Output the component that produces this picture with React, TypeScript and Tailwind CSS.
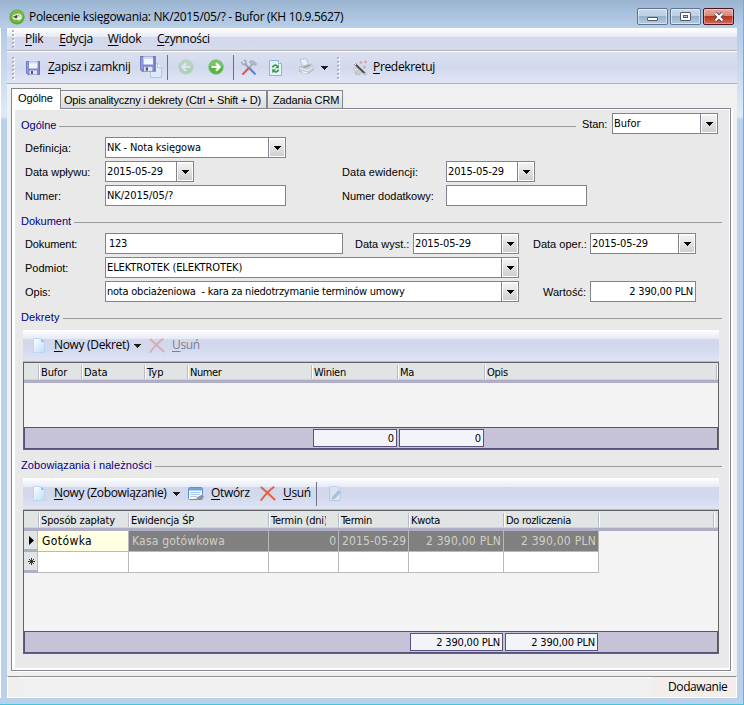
import React from "react";
import clsx from "clsx";

const UI_FONT = "font-['Open_Sans',sans-serif] text-[12px] tracking-[-0.33px]";
const FORM_FONT = "font-['Liberation_Sans',sans-serif] text-[11px]";
const FIELD_FONT = "font-['DejaVu_Sans_Condensed','DejaVu_Sans',sans-serif] text-[11px]";

const BAR =
  "bg-[linear-gradient(to_bottom,#ffffff_0px,#e6eaf5_9px,#d3d8ec_9px,#d3d9ed_60%,#dfe4f5_100%)]";

interface TextProps {
  children?: React.ReactNode;
  className?: string;
}

/* ---------- small pieces ---------- */

const Caret = ({ className }: { className?: string }) => (
  <svg width="7" height="4" viewBox="0 0 7 4" className={clsx("shrink-0", className)} shapeRendering="crispEdges">
    <path d="M0 0h7v1H6v1H5v1H4v1H3V3H2V2H1V1H0z" fill="currentColor" />
  </svg>
);

const Grip = ({ className }: TextProps) => (
  <div className={clsx("flex flex-col gap-[2px] shrink-0", className)}>
    {Array.from({ length: 6 }).map((_, i) => (
      <span key={i} className="w-[2px] h-[2px] shrink-0 bg-[#b1b4bf] shadow-[1px_1px_0_#ffffff]" />
    ))}
  </div>
);

const Label = ({ children, className }: TextProps) => (
  <span className={clsx(FORM_FONT, "block shrink-0 whitespace-nowrap text-black leading-[23px] h-[21px]", className)}>
    {children}
  </span>
);

interface FieldProps {
  value?: string;
  className?: string;
  textClass?: string;
  dropdown?: boolean;
  right?: boolean;
}

const Field = ({ value, className, textClass, dropdown, right }: FieldProps) => (
  <div className={clsx("flex h-[21px] shrink-0 bg-white border border-[#7f848e]", className)}>
    <div
      className={clsx(
        FIELD_FONT,
        "flex-1 min-w-0 whitespace-pre leading-[20px] h-[19px] text-black",
        right ? "text-right pr-[2px]" : "pl-[1px]",
        textClass
      )}
    >
      {value}
    </div>
    {dropdown && (
      <div className="w-[17px] border-l border-[#7f848e] p-px">
        <div className="flex h-full items-center justify-center bg-gradient-to-b from-[#f4f4f4] to-[#cfcfcf] text-black">
          <Caret className="mt-px" />
        </div>
      </div>
    )}
  </div>
);

interface GroupTitleProps {
  title: string;
  className?: string;
  textClass?: string;
}

const GroupTitle = ({ title, className, textClass }: GroupTitleProps) => (
  <div className={clsx("flex h-[12px] items-center", className)}>
    <span className={clsx(FORM_FONT, "leading-[12px] text-[#00007f] whitespace-nowrap shrink-0", textClass)}>{title}</span>
    <span className="ml-[3px] mt-[3px] h-px flex-1 bg-[#9b9b9b]" />
  </div>
);

/* ---------- icons ---------- */

const AppIcon = () => (
  <svg width="16" height="16" viewBox="0 0 16 16">
    <circle cx="8" cy="8" r="7.6" fill="#5fa82f" />
    <circle cx="8" cy="7.2" r="6.4" fill="#78bd42" />
    <path d="M3.400 8.200c.2-2 1.700-3 3.600-2.900 1.400-.8 3.900-.6 5.200.8 1.100 1.400.9 3.900-.9 4.700-1.200.6-2.700.3-3.600-.3-2 .6-4.100-.3-4.300-2.300z" fill="#eef3e8" />
    <path d="M6.800 6.200c1-.4 1.900.4 1.700 1.600s-1.400 1.900-2.300 1.400-.8-2.400.6-3z" fill="#3f4f38" />
    <path d="M4.200 7.800h2.500" stroke="#3f4f38" />
    <path d="M9 6.200l2.300 1.300" stroke="#6e8b5a" strokeWidth=".8" />
  </svg>
);

const SaveShape = () => (
  <>
    <path d="M1.500 1.500h13v13h-11.500l-1.500-1.500z" fill="#7e87cf" stroke="#6d75b8" />
    <path d="M4 1.500h8.500v7H4z" fill="#f2f5fc" />
    <path d="M4 1.500h8.500v2H4z" fill="#cfd8f3" />
    <path d="M4.500 10.500h7.500v4H4.500z" fill="#e4e6ee" />
    <path d="M6 11h2v3H6z" fill="#4d5390" />
    <path d="M2.500 2v11" stroke="#9aa2dd" />
  </>
);

const SaveIcon = () => (
  <svg width="16" height="16" viewBox="0 0 16 16">
    <SaveShape />
  </svg>
);

const SaveNewIcon = () => (
  <svg width="24" height="24" viewBox="0 0 24 24">
    <path d="M11.500 8.500h7l4 4v10h-11z" fill="#dcebfb" stroke="#a9c7e8" />
    <path d="M18.500 8.500v4h4" fill="#f8fcff" stroke="#a9c7e8" />
    <g transform="scale(1.12)">
      <SaveShape />
    </g>
  </svg>
);

const ArrowIcon = ({ back }: { back?: boolean }) => (
  <svg width="16" height="16" viewBox="0 0 16 16" className={back ? "-scale-x-100 opacity-30" : ""}>
    <circle cx="8" cy="8" r="7.300" fill="#55b545" stroke="#7cc173" strokeWidth=".8" />
    <path d="M1.500 7a6.500 6 0 0 1 13 0c-3 1.500-10 1.500-13 0z" fill="#85cf76" opacity=".7" />
    <path d="M3.500 8h7.500M8 4.200L11.800 8 8 11.800" fill="none" stroke="#fff" strokeWidth="2.100" />
  </svg>
);

const ToolsIcon = () => (
  <svg width="18" height="17" viewBox="0 0 18 17">
    <path d="M4.500 4.500L9 9" stroke="#8a95ab" strokeWidth="1.700" />
    <path d="M9.500 9.200l5.300 5.600" stroke="#5f80cf" strokeWidth="2.100" strokeLinecap="round" />
    <path d="M1.500 2.500l.7 2.500 2.500.6 1.500-1.500-.5-2.300-2-.8" fill="none" stroke="#9aa5b8" strokeWidth="1.300" />
    <path d="M12.800 4.800L8.500 9.500" stroke="#9aa3b5" strokeWidth="1.500" />
    <path d="M8.600 9.200L3 15" stroke="#de5656" strokeWidth="2.100" strokeLinecap="round" />
    <path d="M9.500 2.700c2-1.200 4-1 5.300.4l1.700 1.900-1.300 1.400-1.700-1.500-1.700.6z" fill="#b8c0ce" stroke="#8993a6" strokeWidth=".7" />
  </svg>
);

const RefreshIcon = () => (
  <svg width="13" height="16" viewBox="0 0 13 16">
    <path d="M.5.500h9l3 3v12H.5z" fill="#e6f1fc" stroke="#8cb3dc" />
    <path d="M9.500.500v3h3" fill="#fff" stroke="#8cb3dc" />
    <path d="M3.500 7.500c.3-2 2.700-3 4.500-1.600" fill="none" stroke="#2f9d3a" strokeWidth="1.700" />
    <path d="M9.800 4.200v4H6z" fill="#2f9d3a" />
    <path d="M9.500 9.800c-.5 2-2.800 2.700-4.600 1.500" fill="none" stroke="#2f9d3a" strokeWidth="1.700" />
    <path d="M3.200 13.200v-4H7z" fill="#2f9d3a" />
  </svg>
);

const PrinterIcon = () => (
  <svg width="16" height="17" viewBox="0 0 16 17">
    <path d="M2 1.500l6-1 3 6.800-6 2.200z" fill="#e6f1fc" stroke="#a9c3e0" strokeWidth=".9" />
    <path d="M1.500 9.500l3-1.500 8.500-1.800 2 2.300v3.500L10.500 15.500l-9-2z" fill="#cdd0d8" stroke="#adb1bc" strokeWidth=".8" />
    <path d="M4.500 9.200l6.500-2.400 1.500 1L6 10.300z" fill="#9b9fa9" />
    <path d="M1.500 10.500l8.500 2 5-3.500" fill="none" stroke="#f1f2f5" />
    <path d="M4 12.800l6 1.200-.8 2-6-1.500z" fill="#f7f9fc" stroke="#b7bcc8" strokeWidth=".6" />
  </svg>
);

const WandIcon = () => (
  <svg width="16" height="16" viewBox="0 0 16 16">
    <path d="M.8 9l3.700-2.500 5.500 6.500-2.500 2.500-4-.8z" fill="#bdbfbf" />
    <path d="M2 9l5 5.500M4 7.500l4.500 6M1.500 11.500l4-3.500" stroke="#ececec" strokeWidth=".8" />
    <path d="M2.500 3.500L14 14.500" stroke="#4c4c4c" strokeWidth="1.900" />
    <path d="M2 3l2 2M12.500 13l1.500 1.500" stroke="#f5f5f5" strokeWidth="1.200" />
    <path d="M9 1v3M7.500 2.500h3M13.500.500v3M12 2h3M12.500 5.500v3M11 7h3" stroke="#cf9d92" strokeWidth=".9" />
  </svg>
);

const PageIcon = () => (
  <svg width="12" height="15" viewBox="0 0 12 15">
    <defs>
      <linearGradient id="page" x1="0" y1="0" x2="1" y2="1">
        <stop offset="0" stopColor="#ffffff" />
        <stop offset="1" stopColor="#bcdcf8" />
      </linearGradient>
    </defs>
    <path d="M.5.500h7.500l3.500 3.500v10.500H.5z" fill="url(#page)" stroke="#bcd5f1" />
    <path d="M8 .500v3.500h3.500z" fill="#8fc0ec" />
  </svg>
);

const CrossIcon = ({ faded }: { faded?: boolean }) => (
  <svg width="16" height="15" viewBox="0 0 16 15" className={faded ? "opacity-35" : ""}>
    <path d="M1.500 1.500C5 4.500 10.500 9.500 14.500 13.500M13.500 1.200C9 4.500 5 9 1.200 14" fill="none" stroke="#e4603f" strokeWidth="2" strokeLinecap="round" />
  </svg>
);

const OpenIcon = () => (
  <svg width="17" height="14" viewBox="0 0 17 14">
    <rect x=".5" y=".5" width="14" height="12" rx="1" fill="#f5faff" stroke="#5a93d0" />
    <path d="M1 1h13v2.500H1z" fill="#6ba5de" />
    <path d="M2.500 5.500h10M2.500 7.500h9M2.500 9.500h6" stroke="#a6c8ea" />
    <path d="M8 10.800l6-3 2 1.700-2 2.500-4.500.5z" fill="#8595aa" />
    <path d="M5.500 11.800l3-1.300 1 1.500z" fill="#f4d6a0" />
  </svg>
);

const EditPageIcon = () => (
  <svg width="13" height="15" viewBox="0 0 13 15" className="opacity-50">
    <path d="M.5.500h8l3 3v11H.5z" fill="#dcebf8" stroke="#a0bfdd" />
    <path d="M3.500 11l6-6.500 2 2-6 6-2.500.8z" fill="#7eb1cc" stroke="#6d9bb8" strokeWidth=".6" />
  </svg>
);

/* ---------- bars ---------- */

const Separator = ({ className }: TextProps) => <span className={clsx("w-px shrink-0 bg-[#6b7183]", className)} />;

interface CmdProps {
  hot: string;
  rest: string;
  className?: string;
}

const Cmd = ({ hot, rest, className }: CmdProps) => (
  <span className={clsx(UI_FONT, "block h-[18px] shrink-0 whitespace-nowrap leading-[16px]", className)}>
    <span className="underline decoration-1 underline-offset-[2px]">{hot}</span>
    {rest}
  </span>
);

const TitleBar = () => (
  <div className="flex h-[28px] shrink-0 items-start bg-gradient-to-b from-[#9ab4d0] to-[#b8cfe9] pl-[9px] pr-[9px]">
    <span className="mt-[9px]">
      <AppIcon />
    </span>
    <span className="ml-[4px] mt-[8px] whitespace-nowrap font-['Open_Sans',sans-serif] text-[12px] leading-[18px] tracking-[-0.32px] text-black">
      Polecenie księgowania: NK/2015/05/? - Bufor (KH 10.9.5627)
    </span>
    <div className="ml-auto mt-[8px] flex gap-[2px]">
      <span className="flex h-[17px] w-[31px] items-center justify-center rounded-[2px] border border-[#5f7390] bg-[linear-gradient(to_bottom,#c8d8ea_0%,#bccfe3_48%,#98b1ca_50%,#b4cbe3_100%)] shadow-[inset_0_0_0_1px_rgba(255,255,255,0.5)]">
        <span className="mt-[4px] h-[4px] w-[11px] rounded-[1px] border border-[#50586a] bg-white" />
      </span>
      <span className="flex h-[17px] w-[31px] items-center justify-center rounded-[2px] border border-[#5f7390] bg-[linear-gradient(to_bottom,#c8d8ea_0%,#bccfe3_48%,#98b1ca_50%,#b4cbe3_100%)] shadow-[inset_0_0_0_1px_rgba(255,255,255,0.5)]">
        <span className="flex h-[9px] w-[11px] items-center justify-center rounded-[1px] border border-[#50586a] bg-white">
          <span className="h-[3px] w-[5px] border border-[#50586a] bg-[#b4cbe3]" />
        </span>
      </span>
      <span className="flex h-[17px] w-[31px] items-center justify-center rounded-[2px] border border-[#4b1420] bg-[linear-gradient(to_bottom,#e8aca2_0%,#d98476_48%,#b8341e_50%,#d4695a_100%)] shadow-[inset_0_0_0_1px_rgba(255,255,255,0.35)]">
        <svg width="12" height="10" viewBox="0 0 12 10">
          <path d="M2.500 1.500l7 7M9.500 1.500l-7 7" stroke="#50485a" strokeWidth="4" />
          <path d="M2.500 1.500l7 7M9.500 1.500l-7 7" stroke="#ffffff" strokeWidth="2.200" />
        </svg>
      </span>
    </div>
  </div>
);

const MenuBar = () => (
  <div className="flex h-[22px] shrink-0 items-start bg-[linear-gradient(to_bottom,#ffffff_0px,#e6eaf5_9px,#d3d8ec_9px,#d5daee_100%)] pl-[5px]">
    <Grip className="mt-[2px] h-[18px] w-[4px] overflow-hidden" />
    <Cmd hot="P" rest="lik" className="ml-[9px] mt-[3px]" />
    <Cmd hot="E" rest="dycja" className="ml-[16px] mt-[3px] tracking-[-0.1px]" />
    <Cmd hot="W" rest="idok" className="ml-[15px] mt-[3px] tracking-[-0.1px]" />
    <Cmd hot="C" rest="zynności" className="ml-[16px] mt-[3px] tracking-[-0.2px]" />
  </div>
);

const ToolBar = () => (
  <div className="mt-[2px] flex h-[32px] shrink-0 items-center border-b border-[#aab1cb] bg-gradient-to-b from-[#dbdff0] via-[#d3d9ed] to-[#e1e6f6] pl-[5px] shadow-[0_-1px_0_#ffffff,0_-2px_0_#b4b4b4]">
    <Grip className="w-[4px]" />
    <span className="ml-[9px]">
      <SaveIcon />
    </span>
    <Cmd hot="Z" rest="apisz i zamknij" className="ml-[7px] w-[91px]" />
    <span className="-mt-[2px]">
      <SaveNewIcon />
    </span>
    <Separator className="ml-[4px] h-[25px]" />
    <span className="ml-[10px] -mt-[2px]">
      <ArrowIcon back />
    </span>
    <span className="ml-[14px] -mt-[2px]">
      <ArrowIcon />
    </span>
    <Separator className="ml-[9px] h-[25px]" />
    <span className="ml-[6px]">
      <ToolsIcon />
    </span>
    <span className="ml-[11px]">
      <RefreshIcon />
    </span>
    <span className="ml-[16px] -mt-[2px]">
      <PrinterIcon />
    </span>
    <Caret className="ml-[7px] text-[#1d1d1d]" />
    <Grip className="ml-[9px] w-[4px]" />
    <span className="ml-[11px]">
      <WandIcon />
    </span>
    <Cmd hot="P" rest="redekretuj" className="ml-[5px] tracking-[-0.5px]" />
  </div>
);

const Tabs = () => (
  <div className="flex h-[20px] shrink-0 items-end pl-[4px]">
    <div className={clsx(FORM_FONT, "relative z-10 -mb-px h-[21px] w-[50px] whitespace-nowrap border border-b-0 border-[#868693] bg-white pl-[6px] leading-[19px] tracking-[-0.1px]")}>
      Ogólne
    </div>
    <div className={clsx(FORM_FONT, "h-[18px] w-[206px] whitespace-nowrap border border-b-0 border-l-0 border-[#868693] bg-gradient-to-b from-[#f4f4f4] to-[#dcdcdc] pl-[3px] leading-[19px] tracking-[-0.23px]")}>
      Opis analityczny i dekrety (Ctrl + Shift + D)
    </div>
    <div className={clsx(FORM_FONT, "h-[18px] w-[76px] whitespace-nowrap border border-b-0 border-[#868693] bg-gradient-to-b from-[#f4f4f4] to-[#dcdcdc] pl-[5px] leading-[19px] tracking-[-0.15px]")}>
      Zadania CRM
    </div>
  </div>
);

/* ---------- grids ---------- */

const HeaderCell = ({ children, className, last }: TextProps & { last?: boolean }) => (
  <div className={clsx("relative h-[17px] shrink-0 whitespace-nowrap pl-[1px]", FIELD_FONT, "leading-[19px]", className)}>
    {children}
    {!last && <span className="absolute right-0 top-[2px] h-[14px] w-[2px] border-l border-[#b7bacb] bg-white" />}
  </div>
);

const GridHeader = ({ children }: TextProps) => (
  <div className="flex h-[20px] shrink-0 border-b-3 border-[#b0adc6] bg-[#e0e4e4] shadow-[inset_0_-1px_0_#d2d0de]">
    {children}
  </div>
);

const Sum = ({ value, className, textClass }: FieldProps) => (
  <div className={clsx(FIELD_FONT, "mt-[1px] h-[18px] shrink-0 border border-[#57527d] bg-[#f3f4fa] pr-[2px] text-right leading-[18px]", className, textClass)}>
    {value}
  </div>
);

const SummaryBar = ({ children }: TextProps) => (
  <div className="flex h-[22px] shrink-0 border border-[#57527d] bg-[#c6c3d8]">{children}</div>
);

const GridBar = ({ children }: TextProps) => (
  <div className={clsx("ml-[8px] flex h-[32px] w-[696px] shrink-0 items-center border-b border-[#b3b9cc] pl-[10px]", BAR)}>
    {children}
  </div>
);

const Cell = ({ children, className }: TextProps) => (
  <div className={clsx("h-[21px] shrink-0 overflow-hidden whitespace-nowrap border-b border-r border-[#b9b9b9] leading-[20px]", "font-['DejaVu_Sans_Condensed','DejaVu_Sans',sans-serif] text-[12px]", className)}>
    {children}
  </div>
);

const RowHead = ({ children }: TextProps) => (
  <div className="flex h-[21px] w-[14px] shrink-0 items-center justify-center border-b-3 border-r border-b-[#b0adc6] border-r-[#b7bacb] bg-[#e0e4e4]">
    {children}
  </div>
);

const DekretyGrid = () => (
  <div className="ml-[8px] flex h-[88px] w-[696px] shrink-0 flex-col border border-[#646464] bg-[#f3f3f3]">
    <GridHeader>
      <HeaderCell className="w-[16px]" />
      <HeaderCell className="w-[43px] tracking-[-0.1px]">Bufor</HeaderCell>
      <HeaderCell className="w-[63px]">Data</HeaderCell>
      <HeaderCell className="w-[43px]">Typ</HeaderCell>
      <HeaderCell className="w-[124px] tracking-[-0.4px]">Numer</HeaderCell>
      <HeaderCell className="w-[86px] tracking-[-0.3px]">Winien</HeaderCell>
      <HeaderCell className="w-[87px] tracking-[-0.3px]">Ma</HeaderCell>
      <HeaderCell className="w-[232px] tracking-[-0.3px]">Opis</HeaderCell>
    </GridHeader>
    <div className="flex-1" />
    <SummaryBar>
      <Sum value="0" className="ml-[288px] w-[84px]" />
      <Sum value="0" className="ml-[2px] w-[85px]" />
    </SummaryBar>
  </div>
);

const CELLS = [
  { text: "Kasa gotówkowa", className: "w-[140px] pl-[3px] tracking-[0.2px]" },
  { text: "0", className: "w-[70px] pr-[2px] text-right" },
  { text: "2015-05-29", className: "w-[70px] pl-[3px] tracking-[0.15px]" },
  { text: "2 390,00 PLN", className: "w-[95px] pr-[2px] text-right tracking-[0.25px]" },
  { text: "2 390,00 PLN", className: "w-[95px] pr-[2px] text-right tracking-[0.25px]" },
];

const PlatnosciGrid = () => (
  <div className="ml-[8px] flex h-[144px] w-[696px] shrink-0 flex-col border border-[#646464] bg-[#f3f3f3]">
    <GridHeader>
      <HeaderCell className="w-[16px]" />
      <HeaderCell className="w-[90px] tracking-[-0.1px]">Sposób zapłaty</HeaderCell>
      <HeaderCell className="w-[140px] tracking-[-0.2px]">Ewidencja ŚP</HeaderCell>
      <HeaderCell className="w-[70px] tracking-[-0.2px]">
        <span className="block w-[55px] overflow-hidden">Termin (dni)</span>
      </HeaderCell>
      <HeaderCell className="w-[70px] tracking-[-0.3px]">Termin</HeaderCell>
      <HeaderCell className="w-[95px] tracking-[-0.3px]">Kwota</HeaderCell>
      <HeaderCell className="w-[95px] tracking-[-0.3px]">Do rozliczenia</HeaderCell>
      <HeaderCell className="w-[115px]" />
    </GridHeader>
    <div className="flex">
      <RowHead>
        <svg width="5" height="9" viewBox="0 0 5 9" className="ml-px">
          <path d="M0 0l5 4.500L0 9z" fill="#000" />
        </svg>
      </RowHead>
      <Cell className="w-[91px] bg-[#ffffe1] pl-[4px] tracking-[0.4px]">Gotówka</Cell>
      {CELLS.map((cell, i) => (
        <Cell key={i} className={clsx("bg-[#808080] text-[#d2cfc4]", cell.className)}>
          {cell.text}
        </Cell>
      ))}
    </div>
    <div className="flex">
      <RowHead>
        <svg width="7" height="7" viewBox="0 0 7 7" className="ml-px">
          <path d="M3.500 0v7M0 3.500h7M1 1l5 5M6 1L1 6" stroke="#222" strokeWidth=".9" />
        </svg>
      </RowHead>
      <Cell className="w-[91px] bg-white" />
      {CELLS.map((cell, i) => (
        <Cell key={i} className={clsx("bg-white", cell.className)} />
      ))}
    </div>
    <div className="flex-1" />
    <SummaryBar>
      <Sum value="2 390,00 PLN" className="ml-[385px] w-[93px] tracking-[-0.2px]" />
      <Sum value="2 390,00 PLN" className="ml-[2px] w-[93px] tracking-[-0.2px]" />
    </SummaryBar>
  </div>
);

/* ---------- form ---------- */

const DATE = "tracking-[-0.15px]";

const GeneralForm = () => (
  <>
    <div className="flex h-[21px] shrink-0 mt-[3px]">
      <GroupTitle title="Ogólne" className="mt-[6px] ml-[6px] w-[555px]" />
      <Label className="ml-[6px] w-[30px] tracking-[-0.1px]">Stan:</Label>
      <Field value="Bufor" dropdown className="w-[106px]" />
    </div>
    <div className="mt-[3px] flex shrink-0">
      <Label className="ml-[10px] w-[80px] tracking-[0.1px]">Definicja:</Label>
      <Field value="NK - Nota księgowa" dropdown className="w-[181px]" textClass="tracking-[-0.15px]" />
    </div>
    <div className="mt-[3px] flex shrink-0">
      <Label className="ml-[10px] w-[80px]">Data wpływu:</Label>
      <Field value="2015-05-29" dropdown className="w-[89px]" textClass={DATE} />
      <Label className="ml-[148px] w-[104px] tracking-[0.1px]">Data ewidencji:</Label>
      <Field value="2015-05-29" dropdown className="w-[89px]" textClass={DATE} />
    </div>
    <div className="mt-[3px] flex shrink-0">
      <Label className="ml-[10px] w-[80px]">Numer:</Label>
      <Field value="NK/2015/05/?" className="w-[181px]" textClass="tracking-[-0.05px]" />
      <Label className="ml-[56px] w-[104px]">Numer dodatkowy:</Label>
      <Field className="w-[141px]" />
    </div>
  </>
);

const DocumentForm = () => (
  <>
    <div className="mt-[6px] flex shrink-0">
      <Label className="ml-[10px] w-[80px] tracking-[-0.1px]">Dokument:</Label>
      <Field value="123" className="w-[238px]" textClass="indent-[2px] tracking-[-0.3px]" />
      <Label className="ml-[12px] w-[58px]">Data wyst.:</Label>
      <Field value="2015-05-29" dropdown className="w-[106px]" textClass={DATE} />
      <Label className="ml-[14px] w-[57px]">Data oper.:</Label>
      <Field value="2015-05-29" dropdown className="w-[106px]" textClass={DATE} />
    </div>
    <div className="mt-[3px] flex shrink-0">
      <Label className="ml-[10px] w-[80px]">Podmiot:</Label>
      <Field value="ELEKTROTEK (ELEKTROTEK)" dropdown className="w-[414px]" textClass="tracking-[-0.08px]" />
    </div>
    <div className="mt-[3px] flex shrink-0">
      <Label className="ml-[10px] w-[80px]">Opis:</Label>
      <Field
        value="nota obciażeniowa  - kara za niedotrzymanie terminów umowy"
        dropdown
        className="w-[414px]"
        textClass="tracking-[-0.23px]"
      />
      <Label className="ml-[24px] w-[47px]">Wartość:</Label>
      <Field value="2 390,00 PLN" right className="w-[106px]" textClass="tracking-[-0.2px]" />
    </div>
  </>
);

const App: React.FC = () => {
  return (
    <div className="flex h-[705px] w-[744px] flex-col overflow-hidden border-b border-r border-[#45c4da] bg-[#b9d1ea] select-none">
      <TitleBar />
      <div className="flex h-[670px] shrink-0 border-l border-white bg-[linear-gradient(to_bottom,#b3cbe5_0px,#dfeaf7_88px,#b9d1ea_92px)] pl-[6px]">
        <div className="flex w-[730px] flex-col bg-[#f0f0f0]">
          <MenuBar />
          <ToolBar />
          <div className="h-[4px] shrink-0" />
          <Tabs />
          <div className="ml-[4px] flex h-[563px] w-[720px] shrink-0 flex-col border border-[#868693] bg-[#e9e9e9] shadow-[inset_3px_0_0_#ffffff,inset_-1px_-2px_0_#ffffff,inset_0_1px_0_#ffffff,2px_1px_0_#ffffff]">
            <div className="ml-[3px] flex flex-col pt-px">
              <GeneralForm />
              <GroupTitle title="Dokument" className="ml-[6px] mt-[9px] w-[701px] shrink-0" />
              <DocumentForm />
              <GroupTitle title="Dekrety" className="ml-[6px] mt-[9px] w-[701px] shrink-0" textClass="tracking-[0.1px]" />
              <div className="mt-[7px]" />
              <GridBar>
                <PageIcon />
                <Cmd hot="N" rest="owy (Dekret)" className="ml-[9px] w-[76px]" />
                <Caret className="ml-[4px] text-[#1d1d1d]" />
                <span className="ml-[8px]">
                  <CrossIcon faded />
                </span>
                <Cmd hot="U" rest="suń" className="ml-[7px] text-[#7c7f8c]" />
              </GridBar>
              <DekretyGrid />
              <GroupTitle
                title="Zobowiązania i należności"
                className="ml-[6px] mt-[9px] w-[701px] shrink-0"
                textClass="tracking-[0.1px]"
              />
              <div className="mt-[7px]" />
              <GridBar>
                <PageIcon />
                <Cmd hot="N" rest="owy (Zobowiązanie)" className="ml-[9px] w-[115px] tracking-[-0.22px]" />
                <Caret className="ml-[4px] text-[#1d1d1d]" />
                <span className="ml-[8px]">
                  <OpenIcon />
                </span>
                <Cmd hot="O" rest="twórz" className="ml-[6px] w-[39px]" />
                <span className="ml-[10px]">
                  <CrossIcon />
                </span>
                <Cmd hot="U" rest="suń" className="ml-[7px] w-[33px]" />
                <Separator className="h-[24px]" />
                <span className="ml-[12px]">
                  <EditPageIcon />
                </span>
              </GridBar>
              <PlatnosciGrid />
            </div>
          </div>
          <div className="mt-[5px] flex h-[22px] shrink-0 justify-between border border-b-white border-l-white border-r-white border-t-[#8f8f8f] bg-[#f0f0f0] shadow-[inset_0_1px_0_#ffffff]">
            <span className="w-[10px] bg-[#f3eeec]" />
            <span className="w-[84px] bg-[#f3eeec] pl-[16px] font-['Open_Sans',sans-serif] text-[12px] leading-[20px] tracking-[-0.4px]">
              Dodawanie
            </span>
          </div>
        </div>
      </div>
    </div>
  );
};

export default App;
